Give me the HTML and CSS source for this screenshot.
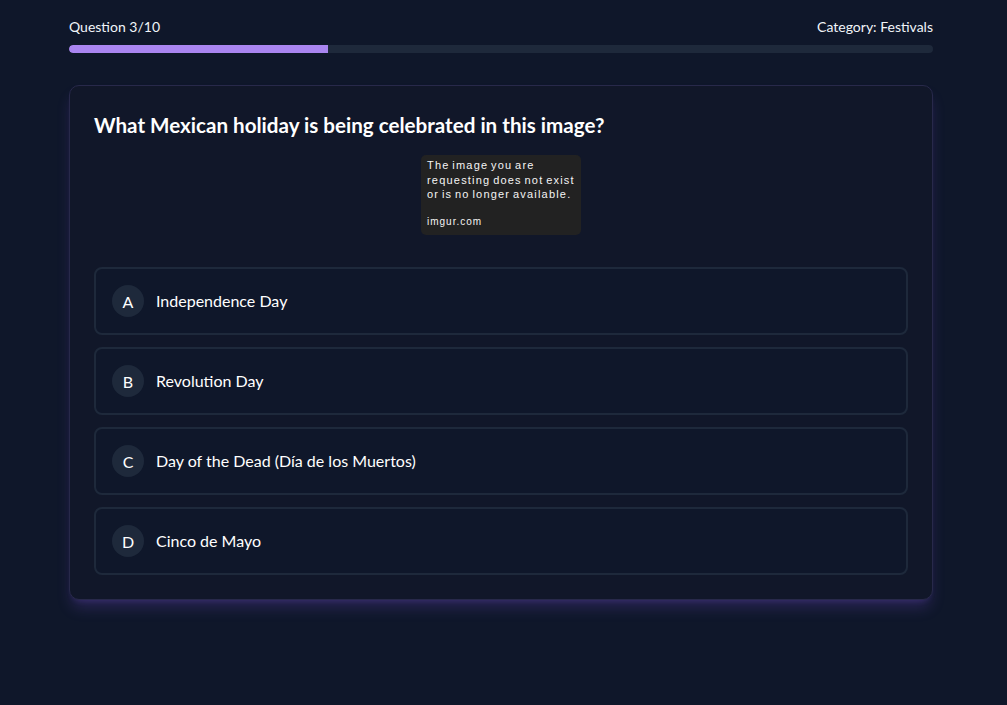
FILE: index.html
```html
<!DOCTYPE html>
<html lang="en">
<head>
<meta charset="utf-8">
<title>Quiz</title>
<link rel="stylesheet" href="styles.css">
</head>
<body>
<div class="container">
  <div class="meta">
    <span>Question 3/10</span>
    <span>Category: Festivals</span>
  </div>
  <div class="track"><div class="fill" style="width:30%"></div></div>

  <div class="card">
    <h2 class="question">What Mexican holiday is being celebrated in this image?</h2>
    <div class="image-wrap">
      <div class="broken">
        <p>The image you are<br>requesting does not exist<br>or is no longer available.</p>
        <p class="site">imgur.com</p>
      </div>
    </div>
    <div class="options">
      <button class="option"><span class="letter">A</span><span class="label">Independence Day</span></button>
      <button class="option"><span class="letter">B</span><span class="label">Revolution Day</span></button>
      <button class="option"><span class="letter">C</span><span class="label">Day of the Dead (Día de los Muertos)</span></button>
      <button class="option"><span class="letter">D</span><span class="label">Cinco de Mayo</span></button>
    </div>
  </div>
</div>
</body>
</html>
```

FILE: styles.css
```css
* { box-sizing: border-box; }
html, body { margin: 0; padding: 0; }
body {
  background: #0f172a;
  color: #ffffff;
  font-family: Lato, "Noto Sans", sans-serif;
  height: 705px;
  overflow: hidden;
}
.container {
  width: 864px;
  margin-left: 69px;
  padding-top: 17px;
}
.meta {
  display: flex;
  justify-content: space-between;
  font-size: 14px;
  line-height: 20px;
  margin-bottom: 8px;
  color: #f1f5f9;
}
.track {
  height: 8px;
  background: #1e293b;
  border-radius: 4px;
  overflow: hidden;
  margin-bottom: 32px;
}
.fill {
  height: 100%;
  background: #a985f0;
  border-radius: 4px 0 0 4px;
}
.card {
  background: #111729;
  border: 1px solid #28294a;
  border-radius: 10px;
  padding: 24px;
  box-shadow: 0 10px 15px -3px rgba(139, 92, 246, 0.22), 0 4px 6px -4px rgba(139, 92, 246, 0.22);
}
.question {
  margin: 0 0 16px 0;
  padding-top: 1px;
  font-size: 20.6px;
  line-height: 28px;
  font-weight: 700;
  color: #ffffff;
}
.image-wrap {
  display: flex;
  justify-content: center;
  margin-bottom: 32px;
}
.broken {
  width: 160px;
  height: 80px;
  background: #222222;
  border-radius: 5px;
  padding: 3px 6px;
  font-family: "Liberation Sans", Arial, sans-serif;
  font-size: 11px;
  letter-spacing: 1.2px;
  word-spacing: -1.5px;
  line-height: 14.5px;
  color: #f4f4f4;
}
.broken p { margin: 0; white-space: nowrap; }
.broken .site { margin-top: 13px; font-size: 10px; letter-spacing: 1px; }
.options {
  display: flex;
  flex-direction: column;
  gap: 12px;
}
.option {
  display: flex;
  align-items: center;
  width: 100%;
  padding: 16px;
  background: #0f172a;
  border: 2px solid #1e293b;
  border-radius: 8px;
  color: #ffffff;
  font-family: inherit;
  font-size: 16px;
  text-align: left;
  cursor: pointer;
}
.letter {
  width: 32px;
  height: 32px;
  border-radius: 50%;
  background: #1e293b;
  display: flex;
  align-items: center;
  justify-content: center;
  margin-right: 12px;
  font-size: 16px;
  flex-shrink: 0;
}
.label { line-height: 24px; }
```
